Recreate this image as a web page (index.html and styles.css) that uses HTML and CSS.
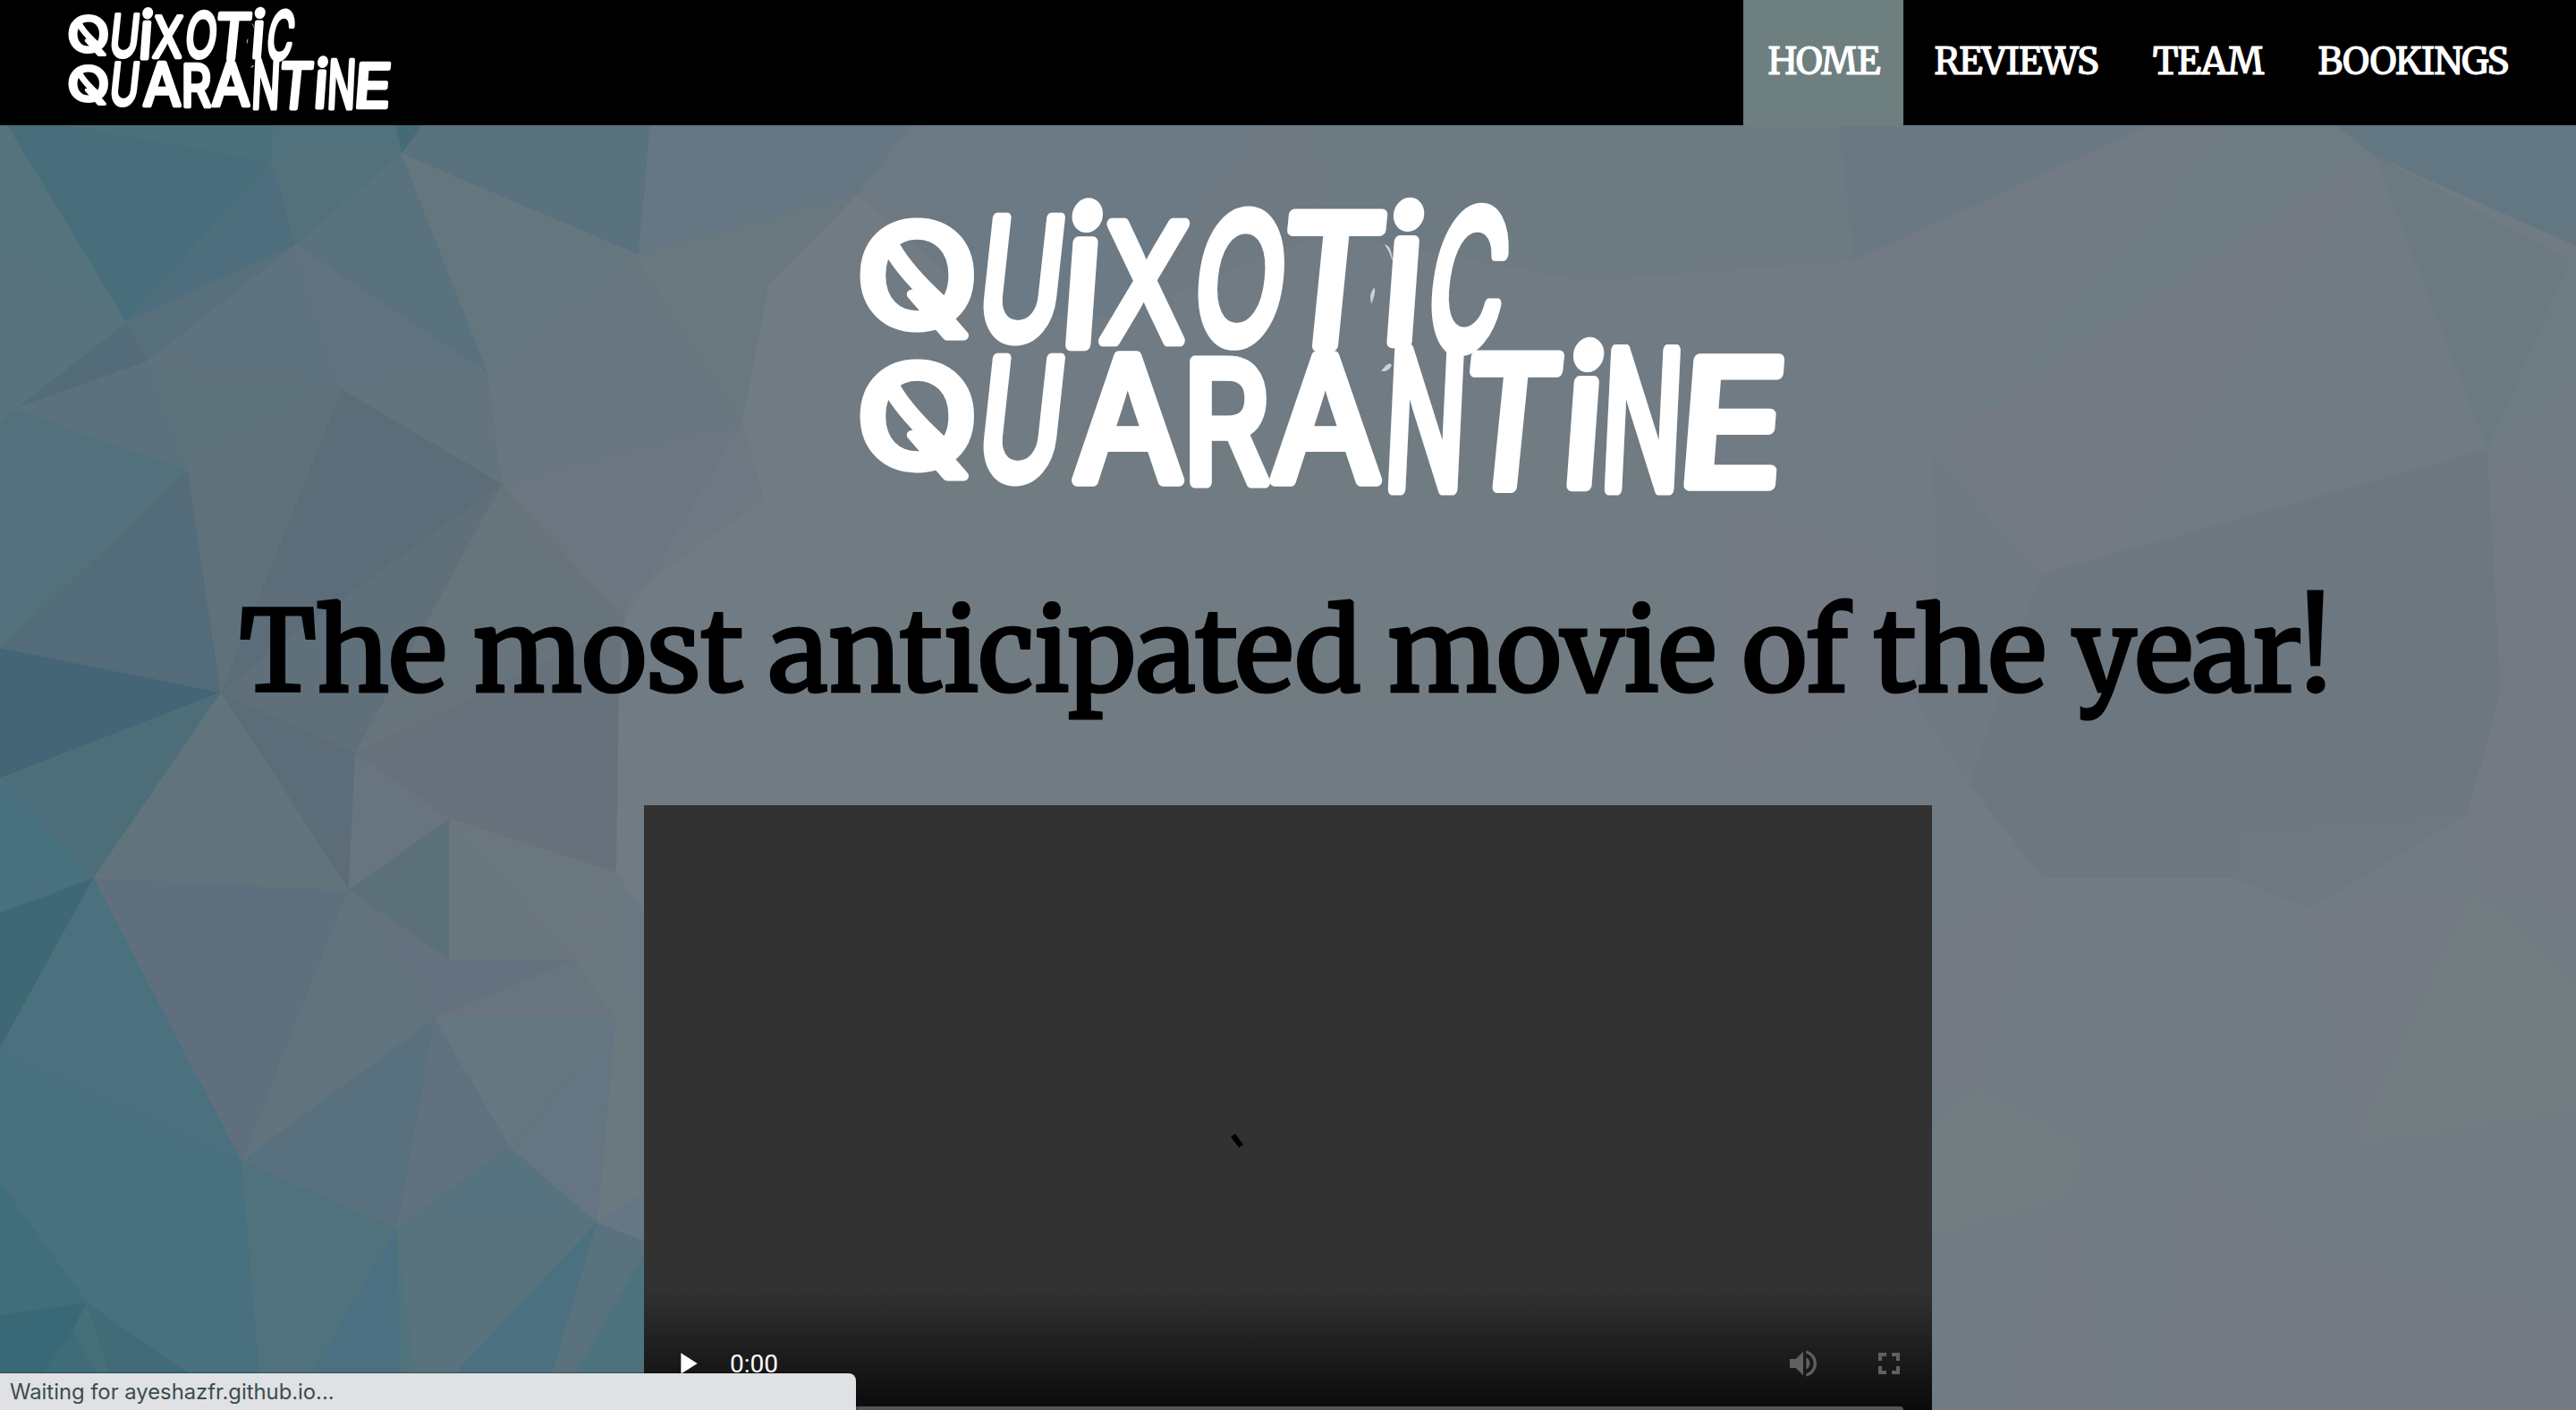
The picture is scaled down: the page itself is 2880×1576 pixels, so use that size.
FILE: index.html
```html
<!DOCTYPE html>
<html lang="en">
<head>
<meta charset="utf-8">
<title>Quixotic Quarantine</title>
<link rel="stylesheet" href="styles.css">
</head>
<body>
<svg class="backdrop" viewBox="0 140 2880 1436" aria-hidden="true">
  <g>
    <path fill="#48707e" d="M0 1200H727V1576H0z"/>
    <path fill="#60707a" d="M247 774L382 435 600 541 400 850z"/>
    <path fill="#54737d" d="M0 140h8L141 360 0 278z"/>
    <path fill="#58737d" d="M0 278L141 360 17 457 0 470z"/>
    <path fill="#486d7b" d="M8 140h70L305 180 141 360z"/>
    <path fill="#4a707c" d="M78 140H306L305 180z"/>
    <path fill="#51727c" d="M306 140H442L449 172 305 180z"/>
    <path fill="#446b76" d="M442 140H472L449 172z"/>
    <path fill="#4e6e7e" d="M305 180L331 274 141 360z"/>
    <path fill="#52717b" d="M305 180L449 172 331 274z"/>
    <path fill="#5a727e" d="M472 140H727L714 285 449 172z"/>
    <path fill="#5a727d" d="M449 172L546 418 331 274z"/>
    <path fill="#64777f" d="M449 172L712 285 546 418z"/>
    <path fill="#57707c" d="M141 360L331 274 165 404z"/>
    <path fill="#546c79" d="M141 360L165 404 17 457z"/>
    <path fill="#5e737e" d="M331 274L382 435 165 404z"/>
    <path fill="#60737e" d="M331 274L546 418 382 435z"/>
    <path fill="#5b727e" d="M17 457L165 404 210 525z"/>
    <path fill="#5e727c" d="M165 404L382 435 210 525z"/>
    <path fill="#52717d" d="M0 470L17 457 210 525 0 724z"/>
    <path fill="#546c79" d="M210 525L247 774 0 724z"/>
    <path fill="#5f727c" d="M210 525L382 435 247 774z"/>
    <path fill="#5c6d79" d="M382 435L561 541 340 700 247 774z"/>
    <path fill="#63747e" d="M382 435L546 418 561 541z"/>
    <path fill="#68767f" d="M546 418L712 285 830 471 561 541z"/>
    <path fill="#6b7680" d="M561 541L830 471 698 693z"/>
    <path fill="#60707a" d="M561 541L397 842 247 774 340 700z"/>
    <path fill="#68747b" d="M561 541L698 693 693 760 397 842z"/>
    <path fill="#446576" d="M0 724L247 774 0 870z"/>
    <path fill="#4d6e79" d="M0 870L247 774 105 981z"/>
    <path fill="#61747c" d="M247 774L390 995 105 981z"/>
    <path fill="#5c6d79" d="M247 774L397 842 390 995z"/>
    <path fill="#66717b" d="M397 842L693 700 689 975 502 915z"/>
    <path fill="#68747f" d="M397 842L502 915 390 995z"/>
    <path fill="#5c7077" d="M502 915V1073L390 995z"/>
    <path fill="#69767e" d="M502 915L643 1073H502z"/>
    <path fill="#6b777f" d="M502 915L689 975 643 1073z"/>
    <path fill="#48707f" d="M0 870L105 981 0 1020z"/>
    <path fill="#3f6875" d="M0 1020L105 981 0 1172z"/>
    <path fill="#4b717f" d="M105 981L270 1298 0 1172z"/>
    <path fill="#5f6f7e" d="M105 981L390 995 270 1298z"/>
    <path fill="#61747d" d="M390 995L486 1138 270 1298z"/>
    <path fill="#63727e" d="M390 995L502 1073H643L486 1138z"/>
    <path fill="#68757f" d="M643 1073L689 1138H486z"/>
    <path fill="#6c7880" d="M689 975V1138L643 1073z"/>
    <path fill="#657780" d="M486 1138H689L569 1282z"/>
    <path fill="#657581" d="M689 1138L667 1367 569 1282z"/>
    <path fill="#607180" d="M486 1138L569 1282 443 1374z"/>
    <path fill="#59717e" d="M486 1138L443 1374 270 1298z"/>
    <path fill="#49707e" d="M0 1172L270 1298 0 1321z"/>
    <path fill="#48707e" d="M0 1321L270 1298 293 1576H210L97 1456z"/>
    <path fill="#406e7a" d="M0 1321L97 1456 0 1470z"/>
    <path fill="#396877" d="M0 1470L97 1456 82 1486 20 1576H0z"/>
    <path fill="#406c79" d="M82 1486L130 1576H20z"/>
    <path fill="#467078" d="M97 1456L135 1576H130L82 1486z"/>
    <path fill="#426b78" d="M97 1456L270 1576H135z"/>
    <path fill="#50727c" d="M270 1298L443 1374 325 1576H293z"/>
    <path fill="#4b7081" d="M443 1374L450 1576H325z"/>
    <path fill="#51737c" d="M443 1374L480 1576H450z"/>
    <path fill="#58737e" d="M443 1374L667 1367 470 1576z"/>
    <path fill="#587380" d="M443 1374L569 1282 667 1367z"/>
    <path fill="#4b7180" d="M667 1367L605 1576H470z"/>
    <path fill="#5a717e" d="M667 1367L727 1390 620 1576H605z"/>
    <path fill="#4c737d" d="M727 1390V1576H620z"/>
    <path fill="#657784" d="M667 1367L727 1330V1390z"/>
    <path fill="#6a7980" d="M689 1138L727 1060V1330L667 1367z"/>
    <path fill="#6a7883" d="M689 975L727 1030V1060L689 1138z"/>
    <path fill="#647782" d="M727 140H1019L959 217 714 285z"/>
    <path fill="#69777f" d="M959 217L859 319 830 471 714 285z"/>
    <path fill="#6d7982" d="M1019 140H1033L1113 354 959 217z"/>
    <path fill="#6b7a85" d="M1033 140H1410L1250 354H1113z"/>
    <path fill="#6e7883" d="M830 471L854 558 702 667 698 693z"/>
    <path fill="#6f7982" d="M1410 140H1460L1480 260 1250 354z"/>
    <path fill="#6d7a82" d="M1460 140H2056L2073 291 1774 314 1480 260z"/>
    <path fill="#707c82" d="M1100 480H1774L1905 560 1930 900H859V819L926 647z"/>
    <path fill="#747a84" d="M1930 560L2167 639 2137 776 1930 870z"/>
    <path fill="#6a7884" d="M2056 140H2404L2073 291z"/>
    <path fill="#727b83" d="M2404 140H2483L2168 497 2073 291z"/>
    <path fill="#6e7b82" d="M2483 140H2612L2655 174 2168 497z"/>
    <path fill="#747a83" d="M2655 174L2400 610 2281 642 2168 497z"/>
    <path fill="#717b84" d="M2655 174L2781 502 2360 621z"/>
    <path fill="#637783" d="M2612 140H2880V275L2655 174z"/>
    <path fill="#6a7a80" d="M2655 174L2873 291 2781 502z"/>
    <path fill="#6d7b82" d="M2873 291L2880 285V424L2781 502z"/>
    <path fill="#6f7982" d="M2160 506L2281 642 2202 877 2137 776 2167 639z"/>
    <path fill="#6d7780" d="M2281 642L2781 502 2796 772 2759 909 2581 1015 2497 981H2283L2202 877z"/>
    <path fill="#6f7780" d="M2500 930L2759 909 2581 1015 2497 981z"/>
    <path fill="#747a83" d="M2781 502L2880 560V1019L2766 996 2759 909 2796 772z"/>
    <path fill="#737a84" d="M2160 1050L2283 981 2210 1216H2160zM2581 1015L2766 996 2631 1280z"/>
    <path fill="#727d82" d="M2766 996L2880 1100V1240L2631 1280zM2210 1216L2330 1280 2309 1340 2160 1380V1260z"/>
    <path fill="#737a83" d="M2449 1298L2595 1408 2680 1576H2407zM2595 1408L2880 1468V1576H2680zM2309 1340L2370 1576H2245z"/>
  </g>
</svg>

<header class="topbar">
  <svg class="brand" viewBox="0 0 1037 334" role="img" aria-label="Quixotic Quarantine">
    <g id="logo">
      <g class="wordmark">
        <text transform="matrix(1.78 0 0 1.557 -2.7 144.6)">Q</text>
        <text transform="matrix(1.27 0 -.2 1.84 128.5 158.7)">U</text>
        <text transform="matrix(1.78 0 -.15 2.08 223.8 165.7)">i</text>
        <text transform="matrix(1.39 0 -.1 1.8 269 161.7)">X</text>
        <text transform="matrix(1.32 0 -.2 1.976 370 164)">O</text>
        <text transform="matrix(1.78 0 -.2 2 464 167)">T</text>
        <text transform="matrix(1.78 0 -.15 2.05 583 163)">i</text>
        <text transform="matrix(1.16 0 -.3 2.1 629 169.6)">C</text>
        <text transform="matrix(1.78 0 0 1.55 -2.7 301.7)">Q</text>
        <text transform="matrix(1.27 0 -.2 1.84 128.5 315.7)">U</text>
        <text transform="matrix(1.78 0 0 1.9 239.7 318.3)">A</text>
        <text transform="matrix(1.51 0 0 1.86 362.2 319.5)">R</text>
        <text transform="matrix(1.78 0 0 1.9 460.7 318.3)">A</text>
        <text transform="matrix(1.2 0 -.1 2.11 585.6 326.6)">N</text>
        <text transform="matrix(1.68 0 -.2 2 668 325)">T</text>
        <text transform="matrix(1.78 0 -.15 2.1 784 322.7)">i</text>
        <text transform="matrix(1.2 0 -.1 2.11 827.6 326.6)">N</text>
        <text transform="matrix(1.98 0 -.15 1.925 912 323.3)">E</text>
      </g>
      <path class="slash" d="M33 50Q48 84 106 134M33 207Q48 241 106 291"/>
      <path class="smudge" d="M572 112q2-9 5-9q1 7-4 18zM588 54q8 2 9 19q-3-10-9-19zM584 196q9-12 12-7q-3 8-12 7z"/>
    </g>
  </svg>
  <nav class="nav">
    <a class="nav-link active" href="#">HOME</a>
    <a class="nav-link" href="#">REVIEWS</a>
    <a class="nav-link" href="#">TEAM</a>
    <a class="nav-link" href="#">BOOKINGS</a>
  </nav>
</header>

<main class="hero">
  <svg class="hero-logo" viewBox="0 0 1037 334" role="img" aria-label="Quixotic Quarantine"><use href="#logo"/></svg>
  <h1 class="tagline">The most anticipated movie of the year!</h1>
  <div class="player">
    <svg class="spinner" viewBox="0 0 20 20"><path d="M5.5 3L14.5 15"/></svg>
    <div class="controls">
      <svg class="icon play" viewBox="0 0 24 24"><path d="M8 5v14l11-7z"/></svg>
      <span class="time">0:00</span>
      <svg class="icon dim volume" viewBox="0 0 24 24"><path d="M3 9v6h4l5 5V4L7 9H3zm13.500 3c0-1.770-1.020-3.290-2.500-4.030v8.050c1.480-.730 2.500-2.250 2.500-4.020zM14 3.230v2.060c2.890.860 5 3.540 5 6.710s-2.110 5.850-5 6.710v2.060c4.010-.910 7-4.490 7-8.770s-2.990-7.860-7-8.770z"/></svg>
      <svg class="icon dim" viewBox="0 0 24 24"><path d="M4.800 4.800h5.400v2.400H7.200v3H4.800zM13.800 4.800h5.400v5.400h-2.400v-3h-3zM4.800 13.800h2.400v3h3v2.400H4.800zM16.800 13.800h2.400v5.400h-5.400v-2.400h3z"/></svg>
    </div>
    <div class="timeline"></div>
  </div>
</main>

<div class="status">Waiting for ayeshazfr.github.io...</div>
</body>
</html>
```
FILE: styles.css
```css
* {
  box-sizing: border-box;
}

body {
  margin: 0;
  height: 1576px;
  overflow: hidden;
  position: relative;
  background: #717b84;
  font-family: Merriweather, "Noto Serif", "DejaVu Serif", serif;
}

.wordmark {
  font: 400 100px Inter, sans-serif;
  fill: #fff;
  stroke: #fff;
  stroke-width: 7;
  stroke-linejoin: round;
}

.slash {
  fill: none;
  stroke: #fff;
  stroke-width: 20;
}

.smudge {
  fill: #fff;
  opacity: .65;
}

.backdrop {
  position: absolute;
  z-index: -1;
  top: 140px;
  left: 0;
  width: 2880px;
  height: 1436px;
}

.topbar {
  display: flex;
  justify-content: space-between;
  height: 140px;
  padding: 0 49px 0 76px;
  background: #000;
}

.brand {
  width: 362px;
  height: 117px;
  margin-top: 7px;
  overflow: visible;
}

.nav {
  display: flex;
  gap: 7px;
}

.nav-link {
  height: 142px;
  padding: 0 27px;
  color: #fff;
  font-size: 41.5px;
  line-height: 137px;
  letter-spacing: -1.1px;
  text-decoration: none;
  -webkit-text-stroke: 1.1px #fff;
}

.active {
  background: #6d7f7e;
  border-radius: 0 0 3px 3px;
}

.hero {
  display: flex;
  flex-direction: column;
  align-items: center;
  padding-top: 79px;
}

.hero-logo {
  width: 1037px;
  height: 334px;
  margin-left: 77px;
  overflow: visible;
}

.tagline {
  margin: 97px 0 0 -6px;
  height: 250px;
  color: #000;
  font-size: 124px;
  font-weight: 400;
  line-height: 159px;
  letter-spacing: -.4px;
  white-space: nowrap;
  -webkit-text-stroke: 3.2px #000;
}

.player {
  display: flex;
  flex-direction: column;
  justify-content: flex-end;
  position: relative;
  width: 1440px;
  height: 720px;
  padding: 0 28px 40px;
  background: linear-gradient(#323232 0 540px, #060606 690px);
}

.spinner {
  position: absolute;
  left: 653px;
  top: 366px;
  width: 20px;
  height: 20px;
  stroke: #000;
  stroke-width: 6;
}

.controls {
  display: flex;
  align-items: center;
  height: 40px;
  margin-bottom: 28px;
}

.icon {
  width: 40px;
  height: 40px;
  fill: #fff;
}

.dim {
  fill: #606060;
}

.time {
  margin-left: 28px;
  color: #fff;
  font: 28px Roboto, sans-serif;
}

.volume {
  margin-left: auto;
  margin-right: 56px;
}

.timeline {
  height: 8px;
  margin: 0 4px;
  border-radius: 4px;
  background: #555;
}

.status {
  position: absolute;
  left: 0;
  bottom: 0;
  width: 957px;
  height: 41px;
  padding-left: 11px;
  border-top-right-radius: 8px;
  background: #dfe1e5;
  box-shadow: 0 0 2px #000;
  color: #3c4c4c;
  font: 23.8px/41px Inter, sans-serif;
}
```
